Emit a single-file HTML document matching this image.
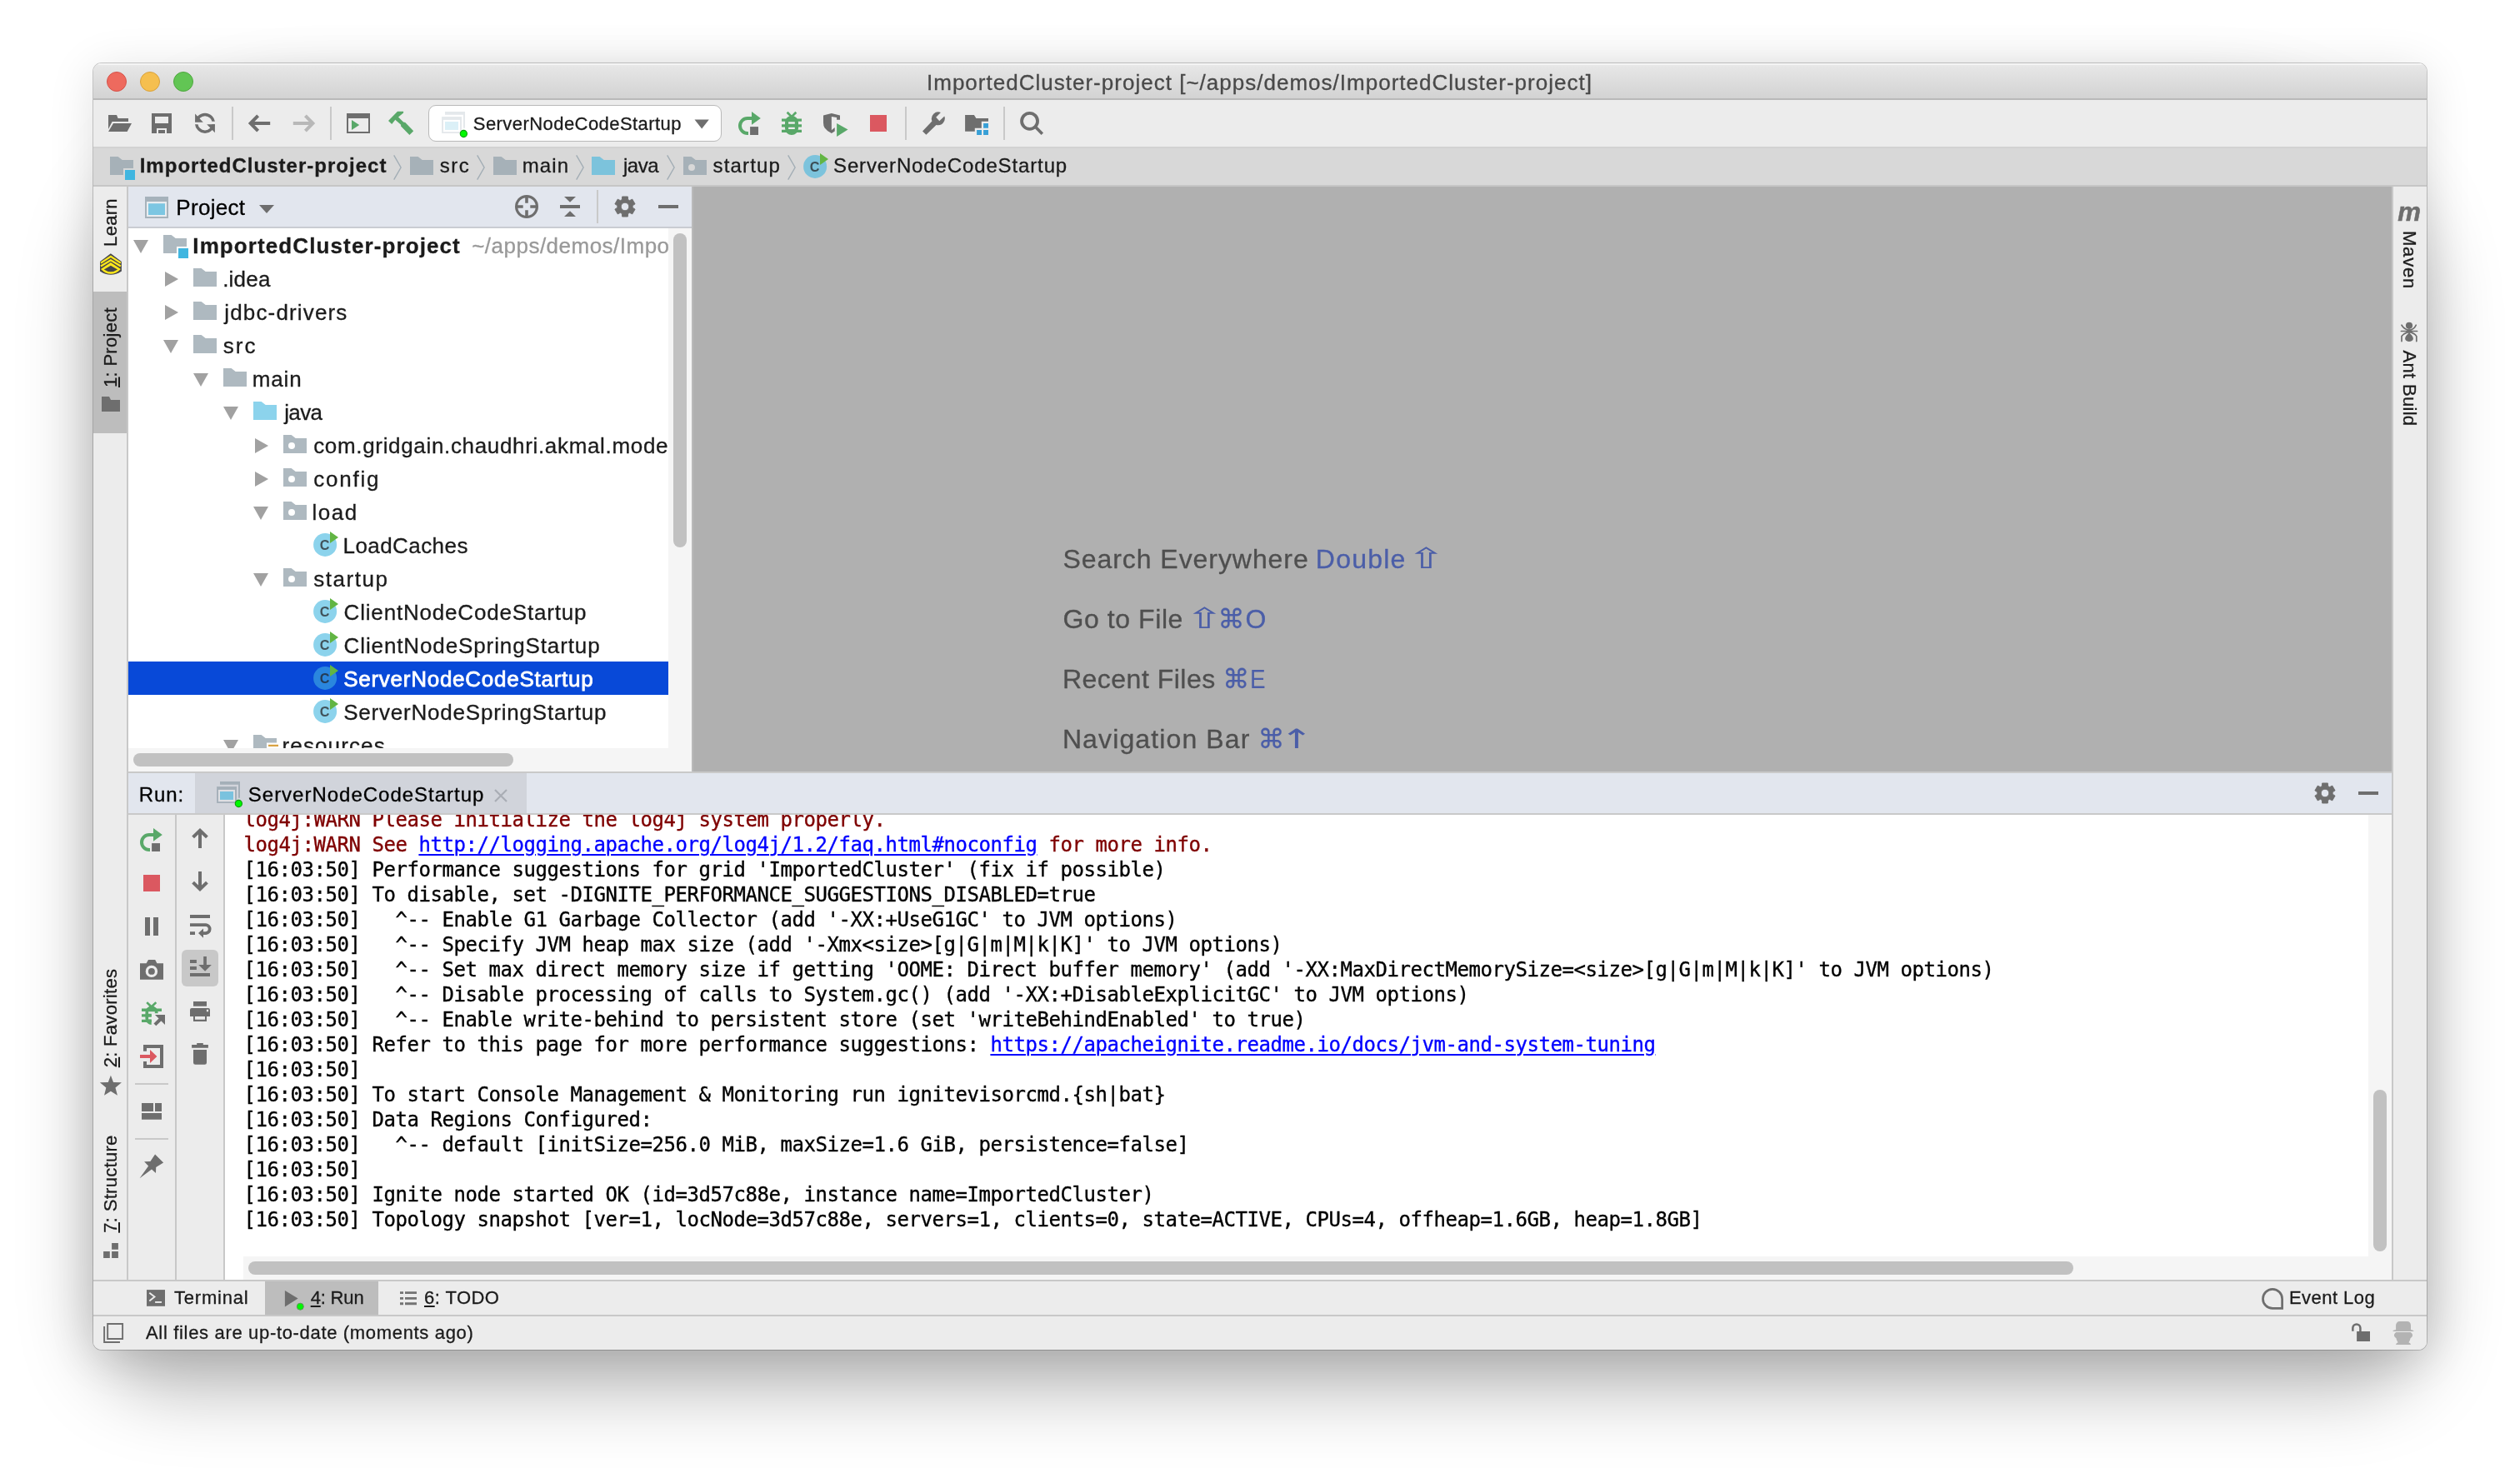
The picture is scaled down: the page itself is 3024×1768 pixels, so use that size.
<!DOCTYPE html>
<html><head><meta charset="utf-8"><title>ImportedCluster-project</title>
<style>
html,body{margin:0;padding:0}
body{width:3024px;height:1768px;overflow:hidden;background:#fff;position:relative;font-family:"Liberation Sans",sans-serif}
#sh{position:absolute;left:112px;top:76px;width:2800px;height:1544px;border-radius:10px;box-shadow:0 0 0 1px rgba(0,0,0,.2),0 8px 56px rgba(0,0,0,.12)}
#sh2{position:absolute;left:112px;top:76px;width:2800px;height:1544px;border-radius:250px 250px 90px 90px;box-shadow:0 48px 90px rgba(0,0,0,.28)}
#w{position:absolute;left:112px;top:76px;width:2800px;height:1544px;border-radius:10px;overflow:hidden;background:#ececec}
#w div,#w span.t,#w svg,#w pre{position:absolute}
#w svg{overflow:visible}
#w{will-change:transform}
.t{white-space:nowrap;-webkit-text-stroke:0.3px}
.t u{text-decoration-thickness:2px;text-underline-offset:2px}
.hint .sc{color:#4b5ea8;font-family:"Liberation Sans","DejaVu Sans",sans-serif}
.con pre{margin:0;font-family:"DejaVu Sans Mono","Liberation Mono",monospace;font-size:24px;line-height:30px;letter-spacing:-0.449px;color:#000;-webkit-text-stroke:0.35px}
.er{color:#7f0000}
.lk{color:#0000ff;text-decoration:underline;text-decoration-thickness:2px;text-underline-offset:3px}
</style></head>
<body>
<div id="sh2"></div>
<div id="sh"></div>
<div id="w">
<div style="left:0px;top:0px;width:2800px;height:42px;background:linear-gradient(#ebebeb,#e6e6e6 10%,#d3d3d3);"></div>
<div style="left:0px;top:0px;width:2800px;height:2px;background:#f4f4f4;"></div>
<div style="left:0px;top:42px;width:2800px;height:2px;background:#b9b9b9;"></div>
<svg style="left:14px;top:8px;" width="28" height="28" viewBox="0 0 28 28"><circle cx="14" cy="14" r="11.5" fill="#ee6a5e" stroke="#d5524a" stroke-width="1"/></svg>
<svg style="left:54px;top:8px;" width="28" height="28" viewBox="0 0 28 28"><circle cx="14" cy="14" r="11.5" fill="#f5bf4f" stroke="#d8a13c" stroke-width="1"/></svg>
<svg style="left:94px;top:8px;" width="28" height="28" viewBox="0 0 28 28"><circle cx="14" cy="14" r="11.5" fill="#62c554" stroke="#4fa73f" stroke-width="1"/></svg>
<span class="t" style="left:1000.00px;top:3.19px;font-size:26px;line-height:40px;color:#494949;letter-spacing:1.011px;">ImportedCluster-project [~/apps/demos/ImportedCluster-project]</span>
<div style="left:0px;top:44px;width:2800px;height:56px;background:#ececec;"></div>
<svg style="left:16px;top:56px;" width="32" height="32" viewBox="0 0 16 16"><path fill="#6e6e6e" d="M1,3 H6 L6.8,5 H13 V7 H3.3 L1,11.5 Z M4,8 H15 L12.3,13 H1 Z"/></svg>
<svg style="left:66px;top:56px;" width="32" height="32" viewBox="0 0 16 16"><path fill="#6e6e6e" fill-rule="evenodd" d="M2,2 H14 V14 H2 Z M4,4 V8 H12 V4 Z M5,11 V14 H11 V11 Z"/><rect fill="#6e6e6e" x="6" y="12" width="4" height="2"/></svg>
<svg style="left:118px;top:56px;" width="32" height="32" viewBox="0 0 16 16"><clipPath id="syT"><rect x="0" y="0" width="16" height="6.85"/></clipPath><clipPath id="syB"><rect x="0" y="8.6" width="16" height="8"/></clipPath><circle cx="8" cy="7.9" r="5.17" fill="none" stroke="#6e6e6e" stroke-width="1.75" clip-path="url(#syT)"/><circle cx="8" cy="7.9" r="5.17" fill="none" stroke="#6e6e6e" stroke-width="1.75" clip-path="url(#syB)"/><path fill="#6e6e6e" d="M2.05,2.3 V7.4 H6.9 Z M13.95,13.6 V8.6 H9.1 Z"/></svg>
<div style="left:166px;top:52px;width:2px;height:40px;background:#c9c9c9;"></div>
<svg style="left:183px;top:56px;" width="32" height="32" viewBox="0 0 16 16"><path fill="none" stroke="#6e6e6e" stroke-width="2" d="M7.3,3.4 L2.8,8 L7.3,12.6 M3,8 H14.6"/></svg>
<svg style="left:237px;top:56px;" width="32" height="32" viewBox="0 0 16 16"><path fill="none" stroke="#b8b8b8" stroke-width="2" d="M8.7,3.4 L13.2,8 L8.7,12.6 M13,8 H1.4"/></svg>
<div style="left:284px;top:52px;width:2px;height:40px;background:#c9c9c9;"></div>
<svg style="left:302px;top:56px;" width="32" height="32" viewBox="0 0 16 16"><path fill="#6e6e6e" fill-rule="evenodd" d="M1,2 H15 V14 H1 Z M2,5 V13 H14 V5 Z"/><path fill="#59a869" d="M4,6 V12 L8.6,9 Z"/></svg>
<svg style="left:353px;top:56px;" width="32" height="32" viewBox="0 0 16 16"><path fill="#59a869" d="M6,0.9 H9.55 V1.7 L6.5,4.25 L9.55,7.25 L10.65,7.5 L15.6,12.6 L13.2,15 L8.05,9.8 V8.9 L4.65,5.9 L2.6,8.5 L0.5,6.55 Z"/></svg>
<div style="left:402px;top:50px;width:352px;height:44px;background:#fff;border:1.5px solid #b9b9b9;border-radius:9px;box-sizing:border-box;"></div>
<svg style="left:416px;top:54px;" width="32" height="32" viewBox="0 0 16 16"><path fill="#e4e8eb" d="M3,2 H15 V11.9 H14 V3.9 H3 Z"/><path fill="#e4e8eb" d="M1.05,5.05 H13 V15 H1.05 Z"/><path fill="#ffffff" d="M2,6.95 H12 V14.1 H2 Z"/><path fill="#dbf0f7" d="M3,8 H11 V12.95 H3 Z"/><circle cx="14.18" cy="15.25" r="2.05" fill="#00f800" stroke="#0c9c0c" stroke-width=".55"/></svg>
<span class="t" style="left:455.80px;top:52.68px;font-size:22px;line-height:40px;color:#1b1b1b;letter-spacing:0.440px;">ServerNodeCodeStartup</span>
<svg style="left:718px;top:56px;" width="32" height="32" viewBox="0 0 16 16"><path fill="#6e6e6e" d="M1.75,5.75 H10.4 L6.08,11.25 Z"/></svg>
<svg style="left:772px;top:56px;" width="32" height="32" viewBox="0 0 16 16"><path fill="none" stroke="#59a869" stroke-width="2" d="M9.2,4.97 H6.5 A4.5,4.5 0 1 0 6.5,13.97 H7"/><path fill="#59a869" d="M9,1 V8.85 L14.4,5 Z"/><rect fill="#6e6e6e" x="8.05" y="10.05" width="4.95" height="4.95"/></svg>
<svg style="left:822px;top:56px;" width="32" height="32" viewBox="0 0 16 16"><path fill="#59a869" d="M2,5.3 H14 V6.93 H2 Z M2,8.57 H14 V10.2 H2 Z M2,11.85 H14 V13.48 H2 Z"/><path fill="#59a869" fill-rule="evenodd" d="M4,7.5 A4,4 0 0 1 12,7.5 V11 A4,4 0 0 1 4,11 Z M6.05,7.08 V8.42 H9.9 V7.08 Z M6.05,10.2 V11.54 H9.9 V10.2 Z"/><path fill="none" stroke="#59a869" stroke-width="1.35" d="M5.3,1.4 L8,4.1 L10.65,1.4"/></svg>
<svg style="left:874px;top:56px;" width="32" height="32" viewBox="0 0 16 16"><path fill="#6e6e6e" d="M1,3.2 L5.93,2 L11,3.2 V5.9 H9.05 V4.45 L5.93,3.95 V12.15 L7.86,10.5 V12.75 L5.93,13.95 Q3.2,12.8 1.8,10.8 Q1,9.4 1,7.6 Z"/><path fill="#59a869" d="M9.05,7.95 V16 L15.75,11.7 Z"/></svg>
<div style="left:932px;top:62px;width:20px;height:20px;background:#db5860;"></div>
<div style="left:974px;top:52px;width:2px;height:40px;background:#c9c9c9;"></div>
<svg style="left:992px;top:56px;" width="32" height="32" viewBox="0 0 16 16"><path fill="#6e6e6e" d="M1.5,12.75 L7.2,6.7 A4.05,4.05 0 0 1 12.44,1.49 L9.6,4.35 L11.65,6.57 L14.67,3.71 A4.05,4.05 0 0 1 9.75,8.95 L3.7,14.85 Z"/></svg>
<svg style="left:1044px;top:56px;" width="32" height="32" viewBox="0 0 16 16"><path fill="#6e6e6e" d="M1.05,3 H6.45 L7.7,5 H15 V6.9 H10.9 V10.85 H6.9 V12.9 H1.05 Z"/><path fill="#389fd6" d="M12.05,8.05 H15 V10.9 H12.05 Z M8.05,12.05 H11 V15 H8.05 Z M12.05,12.05 H15 V15 H12.05 Z"/></svg>
<div style="left:1092px;top:52px;width:2px;height:40px;background:#c9c9c9;"></div>
<svg style="left:1110px;top:56px;" width="32" height="32" viewBox="0 0 16 16"><circle cx="6.78" cy="6.65" r="4.75" fill="none" stroke="#6e6e6e" stroke-width="1.9"/><path stroke="#6e6e6e" stroke-width="1.8" d="M10,9.9 L14.4,14.35"/></svg>
<div style="left:0px;top:100px;width:2800px;height:2px;background:#d2d2d2;"></div>
<div style="left:0px;top:102px;width:2800px;height:44px;background:#d8d8d8;"></div>
<div style="left:0px;top:146px;width:2800px;height:2px;background:#c6c6c6;"></div>
<svg style="left:18px;top:108px;" width="32" height="32" viewBox="0 0 16 16"><path fill="#9aa7b0" fill-opacity=".8" d="M1,2 H5.8 L8.35,4 H15 V9 H9 V13 H1 Z"/><rect fill="#40b6e0" x="10" y="10" width="6" height="6"/></svg>
<span class="t" style="left:55.70px;top:103.18px;font-size:24px;line-height:40px;color:#1b1b1b;letter-spacing:1.018px;font-weight:700;">ImportedCluster-project</span>
<svg style="left:359px;top:108px;" width="12" height="40" viewBox="0 0 12 40"><path fill="none" stroke="#a2adb5" stroke-width="1.4" d="M1.7,2.4 L10.1,17 L1.7,31.6"/></svg>
<svg style="left:378px;top:108px;" width="32" height="32" viewBox="0 0 16 16"><path fill="#9aa7b0" fill-opacity=".8" d="M1,2 H5.8 L8.35,4 H15 V13 H1 Z"/></svg>
<span class="t" style="left:415.70px;top:103.18px;font-size:24px;line-height:40px;color:#1b1b1b;letter-spacing:1.500px;">src</span>
<svg style="left:459px;top:108px;" width="12" height="40" viewBox="0 0 12 40"><path fill="none" stroke="#a2adb5" stroke-width="1.4" d="M1.7,2.4 L10.1,17 L1.7,31.6"/></svg>
<svg style="left:478px;top:108px;" width="32" height="32" viewBox="0 0 16 16"><path fill="#9aa7b0" fill-opacity=".8" d="M1,2 H5.8 L8.35,4 H15 V13 H1 Z"/></svg>
<span class="t" style="left:514.70px;top:103.18px;font-size:24px;line-height:40px;color:#1b1b1b;letter-spacing:1.100px;">main</span>
<svg style="left:578px;top:108px;" width="12" height="40" viewBox="0 0 12 40"><path fill="none" stroke="#a2adb5" stroke-width="1.4" d="M1.7,2.4 L10.1,17 L1.7,31.6"/></svg>
<svg style="left:596px;top:108px;" width="32" height="32" viewBox="0 0 16 16"><path fill="#40b6e0" fill-opacity=".6" d="M1,2 H5.8 L8.35,4 H15 V13 H1 Z"/></svg>
<span class="t" style="left:636.00px;top:103.18px;font-size:24px;line-height:40px;color:#1b1b1b;letter-spacing:-0.500px;">java</span>
<svg style="left:687px;top:108px;" width="12" height="40" viewBox="0 0 12 40"><path fill="none" stroke="#a2adb5" stroke-width="1.4" d="M1.7,2.4 L10.1,17 L1.7,31.6"/></svg>
<svg style="left:706px;top:108px;" width="32" height="32" viewBox="0 0 16 16"><path fill="#9aa7b0" fill-opacity=".8" fill-rule="evenodd" d="M1,2 H5.8 L8.35,4 H15 V13 H1 Z M6,6.5 A2,2 0 1 0 6,10.5 A2,2 0 1 0 6,6.5 Z"/></svg>
<span class="t" style="left:743.50px;top:103.18px;font-size:24px;line-height:40px;color:#1b1b1b;letter-spacing:1.183px;">startup</span>
<svg style="left:831.5px;top:108px;" width="12" height="40" viewBox="0 0 12 40"><path fill="none" stroke="#a2adb5" stroke-width="1.4" d="M1.7,2.4 L10.1,17 L1.7,31.6"/></svg>
<svg style="left:850px;top:108px;" width="32" height="32" viewBox="0 0 16 16"><circle cx="8.05" cy="7.95" r="7" fill="#40b6e0" fill-opacity=".6"/><text x="7.75" y="10.8" text-anchor="middle" font-family="Liberation Sans,sans-serif" font-weight="700" font-size="8.1" fill="#231f20" fill-opacity=".72">C</text><path fill="#62b543" d="M11,0 V7 L16,3.5 Z"/></svg>
<span class="t" style="left:888.00px;top:103.18px;font-size:24px;line-height:40px;color:#1b1b1b;letter-spacing:0.870px;">ServerNodeCodeStartup</span>
<div style="left:0px;top:148px;width:40px;height:1312px;background:#ececec;"></div>
<div style="left:40px;top:148px;width:2px;height:1312px;background:#c8c8c8;"></div>
<div style="left:0px;top:274px;width:40px;height:170px;background:#bdbdbd;"></div>
<span class="t" style="left:-179.5px;top:176px;width:400px;height:30px;line-height:30px;text-align:center;font-size:22px;letter-spacing:0.3px;color:#1b1b1b;transform:rotate(-90deg)">Learn</span>
<svg style="left:5px;top:225px;" width="32" height="32" viewBox="0 0 16 16"><path fill="#46474c" d="M7.95,1.6 L14.45,6.46 V12.2 Q7.95,16.6 1.5,12.2 V6.46 Z"/><path fill="none" stroke="#ffe81a" stroke-width="1.12" d="M1.98,7.33 L7.95,3.42 L13.92,7.33 M1.98,9.25 L7.95,5.6 L13.92,9.25"/><path fill="#ffe81a" fill-rule="evenodd" d="M7.95,7.06 L13.95,10.95 Q7.95,16.85 1.95,10.95 Z M7.95,8.9 L12.06,11.2 Q7.95,14 3.9,11.2 Z"/></svg>
<span class="t" style="left:-179.5px;top:326px;width:400px;height:30px;line-height:30px;text-align:center;font-size:22px;letter-spacing:0.3px;color:#1b1b1b;transform:rotate(-90deg)"><u>1</u>: Project</span>
<svg style="left:5px;top:393px;" width="32" height="32" viewBox="0 0 16 16"><path fill="#6e6e6e" d="M2.5,3.5 H7 L8,5.5 H13.5 V12.5 H2.5 Z"/></svg>
<span class="t" style="left:-179.5px;top:1131px;width:400px;height:30px;line-height:30px;text-align:center;font-size:22px;letter-spacing:0.3px;color:#1b1b1b;transform:rotate(-90deg)"><u>2</u>: Favorites</span>
<svg style="left:5px;top:1211px;" width="32" height="32" viewBox="0 0 16 16"><path fill="#6e6e6e" d="M7.96,1.83 L9.52,6.04 L14.47,6.17 L10.74,9.23 L11.96,13.85 L7.96,11.33 L4.02,13.85 L5.17,9.23 L1.44,6.17 L6.39,6.04 Z"/></svg>
<span class="t" style="left:-179.5px;top:1329.5px;width:400px;height:30px;line-height:30px;text-align:center;font-size:22px;letter-spacing:0.3px;color:#1b1b1b;transform:rotate(-90deg)"><u>7</u>: Structure</span>
<svg style="left:5px;top:1409px;" width="32" height="32" viewBox="0 0 16 16"><path fill="#6e6e6e" d="M8.55,3.55 H12.45 V7.4 H8.55 Z M3.55,8.55 H7.4 V12.45 H3.55 Z M8.55,8.55 H12.45 V12.45 H8.55 Z"/></svg>
<div style="left:2758px;top:148px;width:2px;height:1312px;background:#c8c8c8;"></div>
<div style="left:2760px;top:148px;width:40px;height:1312px;background:#ececec;"></div>
<svg style="left:2763px;top:164px;" width="32" height="32" viewBox="0 0 16 16"><text x="8" y="12.35" text-anchor="middle" font-family="Liberation Sans,sans-serif" font-weight="700" font-style="italic" font-size="15.6" fill="#6e6e6e" stroke="#6e6e6e" stroke-width=".25">m</text></svg>
<span class="t" style="left:2579px;top:221.3px;width:400px;height:30px;line-height:30px;text-align:center;font-size:22px;letter-spacing:0.8px;color:#1b1b1b;transform:rotate(90deg)">Maven</span>
<svg style="left:2763px;top:307px;" width="32" height="32" viewBox="0 0 16 16"><circle cx="8" cy="3.93" r="2.04" fill="#6e6e6e"/><ellipse cx="8" cy="7.2" rx="1.3" ry="1.25" fill="#6e6e6e"/><path fill="#6e6e6e" d="M8,8.1 C9.2,9.2 10.5,10.6 10.45,11.8 C10.4,13 9.2,13.5 8,13.5 C6.8,13.5 5.6,13 5.55,11.8 C5.5,10.6 6.8,9.2 8,8.1 Z"/><path fill="none" stroke="#6e6e6e" stroke-width=".85" stroke-linecap="round" d="M7.4,6.6 Q4.8,5.8 3.5,3.6 M8.6,6.6 Q11.2,5.8 12.1,3.6 M3.2,7.26 H12.8 M7.3,7.7 Q4.6,8.8 3.5,10.3 V13.3 M8.7,7.7 Q11.4,8.8 12.4,10.3 V13.3"/></svg>
<span class="t" style="left:2579px;top:374.5px;width:400px;height:30px;line-height:30px;text-align:center;font-size:22px;letter-spacing:0.3px;color:#1b1b1b;transform:rotate(90deg)">Ant Build</span>
<div style="left:42px;top:148px;width:676px;height:48px;background:#e2e6ee;"></div>
<div style="left:42px;top:196px;width:676px;height:2px;background:#c9ccd2;"></div>
<svg style="left:60px;top:156px;" width="32" height="32" viewBox="0 0 16 16"><path fill="#a6b2bb" d="M1,2 H15 V15 H1 Z"/><path fill="#e8ecf0" d="M2,5 H14 V14 H2 Z"/><path fill="#7cc6e2" d="M3,6.1 H13 V13 H3 Z"/></svg>
<span class="t" style="left:99.30px;top:152.69px;font-size:26px;line-height:40px;color:#000;letter-spacing:0.300px;">Project</span>
<svg style="left:192px;top:159px;" width="32" height="32" viewBox="0 0 16 16"><path fill="#6e6e6e" d="M3.5,5.5 H12.5 L8,10.5 Z"/></svg>
<svg style="left:504px;top:156px;" width="32" height="32" viewBox="0 0 16 16"><circle cx="8" cy="8" r="6.2" fill="none" stroke="#6e6e6e" stroke-width="1.6"/><path stroke="#6e6e6e" stroke-width="1.8" d="M8,1.5 V5.85 M8,10.15 V14.5 M1.5,8 H5.85 M10.15,8 H14.5"/></svg>
<svg style="left:556px;top:156px;" width="32" height="32" viewBox="0 0 16 16"><path fill="#6e6e6e" d="M2,7 H14 V9 H2 Z M4.5,2 H11.5 L8,5.4 Z M4.5,14 H11.5 L8,10.6 Z"/></svg>
<div style="left:604px;top:152px;width:2px;height:40px;background:#c9c9c9;"></div>
<svg style="left:622px;top:156px;" width="32" height="32" viewBox="0 0 16 16"><path fill="#6e6e6e" fill-rule="evenodd" stroke="#6e6e6e" stroke-width=".45" stroke-linejoin="round" d="M6.21,3.76 L6.33,1.98 L9.67,1.98 L9.79,3.76 L10.77,4.33 L12.38,3.54 L14.05,6.43 L12.56,7.43 L12.56,8.57 L14.05,9.57 L12.38,12.46 L10.77,11.67 L9.79,12.24 L9.67,14.02 L6.33,14.02 L6.21,12.24 L5.23,11.67 L3.62,12.46 L1.95,9.57 L3.44,8.57 L3.44,7.43 L1.95,6.43 L3.62,3.54 L5.23,4.33 Z M8,5.6 A2.4,2.4 0 1 0 8,10.4 A2.4,2.4 0 1 0 8,5.6 Z"/></svg>
<div style="left:678px;top:170px;width:24px;height:4px;background:#6e6e6e;"></div>
<div style="left:42px;top:198px;width:648px;height:624px;background:#fff;"></div>
<div style="left:690px;top:198px;width:28px;height:652px;background:#f5f5f5;"></div>
<div style="left:42px;top:822px;width:648px;height:28px;background:#f5f5f5;"></div>
<div style="left:696px;top:204px;width:16px;height:377px;background:#c1c1c1;border-radius:8px;"></div>
<div style="left:48px;top:828px;width:456px;height:16px;background:#c1c1c1;border-radius:8px;"></div>
<div style="left:718px;top:148px;width:2px;height:702px;background:#bababa;"></div>
<div style="left:42px;top:198px;width:648px;height:624px;overflow:hidden">
<svg style="left:6px;top:14px" width="18" height="16" viewBox="0 0 18 16"><path fill="#a1a1a1" d="M0,0 H18 L9,16 Z"/></svg>
<svg style="left:40px;top:4px" width="32" height="32" viewBox="0 0 16 16"><path fill="#9aa7b0" fill-opacity=".8" d="M1,2 H5.8 L8.35,4 H15 V9 H9 V13 H1 Z"/><rect fill="#40b6e0" x="10" y="10" width="6" height="6"/></svg>
<span class="t" style="left:77.30px;top:0.69px;font-size:26px;line-height:40px;color:#1b1b1b;letter-spacing:1.105px;font-weight:700;">ImportedCluster-project</span>
<span class="t" style="left:412.20px;top:0.69px;font-size:26px;line-height:40px;color:#999;letter-spacing:0.487px;">~/apps/demos/ImportedCluster-project</span>
<svg style="left:44px;top:52px" width="16" height="18" viewBox="0 0 16 18"><path fill="#a1a1a1" d="M0,0 V18 L16,9 Z"/></svg>
<svg style="left:76px;top:44px" width="32" height="32" viewBox="0 0 16 16"><path fill="#9aa7b0" fill-opacity=".8" d="M1,2 H5.8 L8.35,4 H15 V13 H1 Z"/></svg>
<span class="t" style="left:113.20px;top:40.69px;font-size:26px;line-height:40px;color:#1b1b1b;letter-spacing:0.200px;">.idea</span>
<svg style="left:44px;top:92px" width="16" height="18" viewBox="0 0 16 18"><path fill="#a1a1a1" d="M0,0 V18 L16,9 Z"/></svg>
<svg style="left:76px;top:84px" width="32" height="32" viewBox="0 0 16 16"><path fill="#9aa7b0" fill-opacity=".8" d="M1,2 H5.8 L8.35,4 H15 V13 H1 Z"/></svg>
<span class="t" style="left:115.30px;top:80.69px;font-size:26px;line-height:40px;color:#1b1b1b;letter-spacing:1.155px;">jdbc-drivers</span>
<svg style="left:42px;top:134px" width="18" height="16" viewBox="0 0 18 16"><path fill="#a1a1a1" d="M0,0 H18 L9,16 Z"/></svg>
<svg style="left:76px;top:124px" width="32" height="32" viewBox="0 0 16 16"><path fill="#9aa7b0" fill-opacity=".8" d="M1,2 H5.8 L8.35,4 H15 V13 H1 Z"/></svg>
<span class="t" style="left:113.70px;top:120.69px;font-size:26px;line-height:40px;color:#1b1b1b;letter-spacing:2.050px;">src</span>
<svg style="left:78px;top:174px" width="18" height="16" viewBox="0 0 18 16"><path fill="#a1a1a1" d="M0,0 H18 L9,16 Z"/></svg>
<svg style="left:112px;top:164px" width="32" height="32" viewBox="0 0 16 16"><path fill="#9aa7b0" fill-opacity=".8" d="M1,2 H5.8 L8.35,4 H15 V13 H1 Z"/></svg>
<span class="t" style="left:148.70px;top:160.69px;font-size:26px;line-height:40px;color:#1b1b1b;letter-spacing:0.900px;">main</span>
<svg style="left:114px;top:214px" width="18" height="16" viewBox="0 0 18 16"><path fill="#a1a1a1" d="M0,0 H18 L9,16 Z"/></svg>
<svg style="left:148px;top:204px" width="32" height="32" viewBox="0 0 16 16"><path fill="#40b6e0" fill-opacity=".6" d="M1,2 H5.8 L8.35,4 H15 V13 H1 Z"/></svg>
<span class="t" style="left:187.30px;top:200.69px;font-size:26px;line-height:40px;color:#1b1b1b;letter-spacing:-0.700px;">java</span>
<svg style="left:152px;top:252px" width="16" height="18" viewBox="0 0 16 18"><path fill="#a1a1a1" d="M0,0 V18 L16,9 Z"/></svg>
<svg style="left:184px;top:244px" width="32" height="32" viewBox="0 0 16 16"><path fill="#9aa7b0" fill-opacity=".8" fill-rule="evenodd" d="M1,2 H5.8 L8.35,4 H15 V13 H1 Z M6,6.5 A2,2 0 1 0 6,10.5 A2,2 0 1 0 6,6.5 Z"/></svg>
<span class="t" style="left:222.20px;top:240.69px;font-size:26px;line-height:40px;color:#1b1b1b;letter-spacing:0.666px;">com.gridgain.chaudhri.akmal.model</span>
<svg style="left:152px;top:292px" width="16" height="18" viewBox="0 0 16 18"><path fill="#a1a1a1" d="M0,0 V18 L16,9 Z"/></svg>
<svg style="left:184px;top:284px" width="32" height="32" viewBox="0 0 16 16"><path fill="#9aa7b0" fill-opacity=".8" fill-rule="evenodd" d="M1,2 H5.8 L8.35,4 H15 V13 H1 Z M6,6.5 A2,2 0 1 0 6,10.5 A2,2 0 1 0 6,6.5 Z"/></svg>
<span class="t" style="left:222.20px;top:280.69px;font-size:26px;line-height:40px;color:#1b1b1b;letter-spacing:1.780px;">config</span>
<svg style="left:150px;top:334px" width="18" height="16" viewBox="0 0 18 16"><path fill="#a1a1a1" d="M0,0 H18 L9,16 Z"/></svg>
<svg style="left:184px;top:324px" width="32" height="32" viewBox="0 0 16 16"><path fill="#9aa7b0" fill-opacity=".8" fill-rule="evenodd" d="M1,2 H5.8 L8.35,4 H15 V13 H1 Z M6,6.5 A2,2 0 1 0 6,10.5 A2,2 0 1 0 6,6.5 Z"/></svg>
<span class="t" style="left:220.60px;top:320.69px;font-size:26px;line-height:40px;color:#1b1b1b;letter-spacing:1.467px;">load</span>
<svg style="left:220px;top:364px" width="32" height="32" viewBox="0 0 16 16"><circle cx="8.05" cy="7.95" r="7" fill="#40b6e0" fill-opacity=".6"/><text x="7.75" y="10.8" text-anchor="middle" font-family="Liberation Sans,sans-serif" font-weight="700" font-size="8.1" fill="#231f20" fill-opacity=".72">C</text><path fill="#62b543" d="M11,0 V7 L16,3.5 Z"/></svg>
<span class="t" style="left:257.60px;top:360.69px;font-size:26px;line-height:40px;color:#1b1b1b;letter-spacing:0.422px;">LoadCaches</span>
<svg style="left:150px;top:414px" width="18" height="16" viewBox="0 0 18 16"><path fill="#a1a1a1" d="M0,0 H18 L9,16 Z"/></svg>
<svg style="left:184px;top:404px" width="32" height="32" viewBox="0 0 16 16"><path fill="#9aa7b0" fill-opacity=".8" fill-rule="evenodd" d="M1,2 H5.8 L8.35,4 H15 V13 H1 Z M6,6.5 A2,2 0 1 0 6,10.5 A2,2 0 1 0 6,6.5 Z"/></svg>
<span class="t" style="left:222.20px;top:400.69px;font-size:26px;line-height:40px;color:#1b1b1b;letter-spacing:1.550px;">startup</span>
<svg style="left:220px;top:444px" width="32" height="32" viewBox="0 0 16 16"><circle cx="8.05" cy="7.95" r="7" fill="#40b6e0" fill-opacity=".6"/><text x="7.75" y="10.8" text-anchor="middle" font-family="Liberation Sans,sans-serif" font-weight="700" font-size="8.1" fill="#231f20" fill-opacity=".72">C</text><path fill="#62b543" d="M11,0 V7 L16,3.5 Z"/></svg>
<span class="t" style="left:258.60px;top:440.69px;font-size:26px;line-height:40px;color:#1b1b1b;letter-spacing:0.815px;">ClientNodeCodeStartup</span>
<svg style="left:220px;top:484px" width="32" height="32" viewBox="0 0 16 16"><circle cx="8.05" cy="7.95" r="7" fill="#40b6e0" fill-opacity=".6"/><text x="7.75" y="10.8" text-anchor="middle" font-family="Liberation Sans,sans-serif" font-weight="700" font-size="8.1" fill="#231f20" fill-opacity=".72">C</text><path fill="#62b543" d="M11,0 V7 L16,3.5 Z"/></svg>
<span class="t" style="left:258.60px;top:480.69px;font-size:26px;line-height:40px;color:#1b1b1b;letter-spacing:0.882px;">ClientNodeSpringStartup</span>
<div style="left:0;top:520px;width:648px;height:40px;background:#0849d8"></div>
<svg style="left:220px;top:524px" width="32" height="32" viewBox="0 0 16 16"><circle cx="8.05" cy="7.95" r="7" fill="#2a86de" fill-opacity="1"/><text x="7.75" y="10.8" text-anchor="middle" font-family="Liberation Sans,sans-serif" font-weight="700" font-size="8.1" fill="#231f20" fill-opacity=".72">C</text><path fill="#62b543" d="M11,0 V7 L16,3.5 Z"/></svg>
<span class="t" style="left:258.20px;top:520.69px;font-size:26px;line-height:40px;color:#fff;letter-spacing:0.740px;-webkit-text-stroke:0.8px;">ServerNodeCodeStartup</span>
<svg style="left:220px;top:564px" width="32" height="32" viewBox="0 0 16 16"><circle cx="8.05" cy="7.95" r="7" fill="#40b6e0" fill-opacity=".6"/><text x="7.75" y="10.8" text-anchor="middle" font-family="Liberation Sans,sans-serif" font-weight="700" font-size="8.1" fill="#231f20" fill-opacity=".72">C</text><path fill="#62b543" d="M11,0 V7 L16,3.5 Z"/></svg>
<span class="t" style="left:258.20px;top:560.69px;font-size:26px;line-height:40px;color:#1b1b1b;letter-spacing:0.795px;">ServerNodeSpringStartup</span>
<svg style="left:114px;top:614px" width="18" height="16" viewBox="0 0 18 16"><path fill="#a1a1a1" d="M0,0 H18 L9,16 Z"/></svg>
<svg style="left:148px;top:604px" width="32" height="32" viewBox="0 0 16 16"><path fill="#9aa7b0" fill-opacity=".8" d="M1,2 H5.8 L8.35,4 H15 V6.7 H9 V13 H1 Z"/><path fill="#d9a343" d="M10,7.9 H16 V9 H10 Z M10,10 H16 V11.1 H10 Z M10,12.1 H16 V13.2 H10 Z M10,14.2 H16 V15.3 H10 Z"/></svg>
<span class="t" style="left:184.60px;top:600.69px;font-size:26px;line-height:40px;color:#1b1b1b;letter-spacing:1.112px;">resources</span>
</div>
<div style="left:720px;top:148px;width:2038px;height:702px;background:#b0b0b0;"></div>
<span class="t" style="left:1163.50px;top:574.81px;font-size:32px;line-height:40px;color:#4f4f4f;letter-spacing:0.938px;">Search Everywhere</span>
<span class="t" style="left:1466.80px;top:574.81px;font-size:32px;line-height:40px;color:#4b5ea8;letter-spacing:1.240px;">Double</span>
<span class="t" style="left:1576.34px;top:574.81px;font-size:32px;line-height:40px;color:#4b5ea8;letter-spacing:0.000px;font-family:'DejaVu Sans','Liberation Sans',sans-serif;transform:scale(1.760,1.07);transform-origin:0 31.1px;-webkit-text-stroke:0;">&#x21E7;</span>
<span class="t" style="left:1163.50px;top:646.91px;font-size:32px;line-height:40px;color:#4f4f4f;letter-spacing:0.578px;">Go to File</span>
<span class="t" style="left:1310.04px;top:646.91px;font-size:32px;line-height:40px;color:#4b5ea8;letter-spacing:0.000px;font-family:'DejaVu Sans','Liberation Sans',sans-serif;transform:scale(1.760,1.07);transform-origin:0 31.1px;-webkit-text-stroke:0;">&#x21E7;</span>
<span class="t" style="left:1349.40px;top:646.91px;font-size:32px;line-height:40px;color:#4b5ea8;letter-spacing:0.000px;font-family:'DejaVu Sans','Liberation Sans',sans-serif;">&#x2318;</span>
<span class="t" style="left:1382.50px;top:646.91px;font-size:32px;line-height:40px;color:#4b5ea8;letter-spacing:0.000px;">O</span>
<span class="t" style="left:1162.90px;top:719.21px;font-size:32px;line-height:40px;color:#4f4f4f;letter-spacing:0.500px;">Recent Files</span>
<span class="t" style="left:1355.30px;top:719.21px;font-size:32px;line-height:40px;color:#4b5ea8;letter-spacing:0.000px;font-family:'DejaVu Sans','Liberation Sans',sans-serif;">&#x2318;</span>
<span class="t" style="left:1388.39px;top:719.21px;font-size:32px;line-height:40px;color:#4b5ea8;letter-spacing:0.000px;transform:scale(0.871,1.0);transform-origin:0 31.1px;-webkit-text-stroke:0;">E</span>
<span class="t" style="left:1162.90px;top:791.21px;font-size:32px;line-height:40px;color:#4f4f4f;letter-spacing:1.123px;">Navigation Bar</span>
<span class="t" style="left:1397.40px;top:791.21px;font-size:32px;line-height:40px;color:#4b5ea8;letter-spacing:0.000px;font-family:'DejaVu Sans','Liberation Sans',sans-serif;">&#x2318;</span>
<span class="t" style="left:1423.91px;top:791.21px;font-size:32px;line-height:40px;color:#4b5ea8;letter-spacing:0.000px;font-family:'DejaVu Sans','Liberation Sans',sans-serif;transform:scale(1.485,1.0);transform-origin:0 31.1px;-webkit-text-stroke:0;">&#x2191;</span>
<div style="left:42px;top:850px;width:2716px;height:2px;background:#c9c9c9;"></div>
<div style="left:42px;top:852px;width:2716px;height:48px;background:#e2e6ee;"></div>
<div style="left:122px;top:852px;width:398px;height:48px;background:#d1d4db;"></div>
<div style="left:42px;top:900px;width:2716px;height:2px;background:#c9c9c9;"></div>
<span class="t" style="left:54.80px;top:857.88px;font-size:24px;line-height:40px;color:#000;letter-spacing:0.900px;">Run:</span>
<svg style="left:146px;top:858px;" width="32" height="32" viewBox="0 0 16 16"><path fill="#a4afb8" d="M3,2 H15 V11.9 H14 V3.9 H3 Z"/><path fill="#a4afb8" d="M1.05,5.05 H13 V15 H1.05 Z"/><path fill="#dedfe3" d="M2,6.95 H12 V14.1 H2 Z"/><path fill="#7ac2de" d="M3,8 H11 V12.95 H3 Z"/><circle cx="14.18" cy="15.25" r="2.05" fill="#00f800" stroke="#0c9c0c" stroke-width=".55"/></svg>
<span class="t" style="left:185.80px;top:857.88px;font-size:24px;line-height:40px;color:#000;letter-spacing:0.990px;">ServerNodeCodeStartup</span>
<svg style="left:473px;top:863px;" width="32" height="32" viewBox="0 0 16 16"><path stroke="#a9adb5" stroke-width="1.1" fill="none" d="M4.5,4.5 L11.5,11.5 M11.5,4.5 L4.5,11.5"/></svg>
<svg style="left:2662px;top:860px;" width="32" height="32" viewBox="0 0 16 16"><path fill="#6e6e6e" fill-rule="evenodd" stroke="#6e6e6e" stroke-width=".45" stroke-linejoin="round" d="M6.21,3.76 L6.33,1.98 L9.67,1.98 L9.79,3.76 L10.77,4.33 L12.38,3.54 L14.05,6.43 L12.56,7.43 L12.56,8.57 L14.05,9.57 L12.38,12.46 L10.77,11.67 L9.79,12.24 L9.67,14.02 L6.33,14.02 L6.21,12.24 L5.23,11.67 L3.62,12.46 L1.95,9.57 L3.44,8.57 L3.44,7.43 L1.95,6.43 L3.62,3.54 L5.23,4.33 Z M8,5.6 A2.4,2.4 0 1 0 8,10.4 A2.4,2.4 0 1 0 8,5.6 Z"/></svg>
<div style="left:2718px;top:874px;width:24px;height:4px;background:#6e6e6e;"></div>
<div style="left:42px;top:902px;width:56px;height:558px;background:#ececec;"></div>
<div style="left:98px;top:902px;width:2px;height:558px;background:#c8c8c8;"></div>
<div style="left:100px;top:902px;width:56px;height:558px;background:#ececec;"></div>
<div style="left:156px;top:902px;width:2px;height:558px;background:#c8c8c8;"></div>
<svg style="left:54px;top:916px;" width="32" height="32" viewBox="0 0 16 16"><path fill="none" stroke="#59a869" stroke-width="2" d="M9.2,4.97 H6.5 A4.5,4.5 0 1 0 6.5,13.97 H7"/><path fill="#59a869" d="M9,1 V8.85 L14.4,5 Z"/><rect fill="#6e6e6e" x="8.05" y="10.05" width="4.95" height="4.95"/></svg>
<div style="left:60px;top:974px;width:20px;height:20px;background:#db5860;"></div>
<svg style="left:54px;top:1020px;" width="32" height="32" viewBox="0 0 16 16"><path fill="#6e6e6e" d="M4,2.5 H7 V13.5 H4 Z M9,2.5 H12 V13.5 H9 Z"/></svg>
<svg style="left:54px;top:1072px;" width="32" height="32" viewBox="0 0 16 16"><path fill="#6e6e6e" fill-rule="evenodd" d="M1,4.1 H4.8 L6,2 H10.1 L11.2,4.1 H15 V13.9 H1 Z M7.95,5.35 A3.6,3.6 0 1 0 7.95,12.55 A3.6,3.6 0 1 0 7.95,5.35 Z"/><circle cx="7.95" cy="8.95" r="1.98" fill="#6e6e6e"/></svg>
<svg style="left:54px;top:1124px;" width="32" height="32" viewBox="0 0 16 16"><clipPath id="baC"><path d="M0,0 H16 V8.1 H7.85 V16 H0 Z"/></clipPath><g clip-path="url(#baC)"><path fill="#59a869" d="M2,5.27 H14 V6.95 H2 Z M2,8.57 H14 V10.27 H2 Z M2,11.85 H14 V13.55 H2 Z"/><path fill="#59a869" fill-rule="evenodd" d="M4.2,7.5 A3.8,3.8 0 0 1 11.8,7.5 V11.2 A3.8,3.8 0 0 1 4.2,11.2 Z M6.05,7.08 V8.42 H9.9 V7.08 Z M6.05,10.3 V11.7 H9.9 V10.3 Z"/><path fill="none" stroke="#59a869" stroke-width="1.35" d="M5.1,1.55 L7.87,4.25 L10.65,1.55"/></g><path fill="#6e6e6e" d="M10,9.05 H16 V15 Z"/><path stroke="#6e6e6e" stroke-width="2" d="M9.95,14.97 L13.6,11.4"/></svg>
<svg style="left:54px;top:1176px;" width="32" height="32" viewBox="0 0 16 16"><path fill="#6e6e6e" d="M3,1 H15 V14.95 H3 V11 H5 V12.95 H13 V3 H5 V4.9 H3 Z"/><path fill="#db5860" d="M1,7 H7 V3.95 L11.2,8 L7,12 V9.05 H1 Z"/></svg>
<div style="left:50px;top:1224px;width:40px;height:2px;background:#c9c9c9;"></div>
<svg style="left:54px;top:1242px;" width="32" height="32" viewBox="0 0 16 16"><path fill="#6e6e6e" d="M2,3 H9 V7.95 H2 Z M10,3 H14 V7.95 H10 Z M2,9.05 H14 V12.9 H2 Z"/></svg>
<div style="left:50px;top:1290px;width:40px;height:2px;background:#c9c9c9;"></div>
<svg style="left:54px;top:1308px;" width="32" height="32" viewBox="0 0 16 16"><path fill="#6e6e6e" d="M10.03,0.8 L15.05,5.7 L10.6,8.45 L10.5,12.05 L8,9.8 L0.8,15.1 L6.05,7.7 L3.55,5.1 L7.2,5.05 Z"/></svg>
<svg style="left:112px;top:914px;" width="32" height="32" viewBox="0 0 16 16"><path fill="none" stroke="#6e6e6e" stroke-width="2" d="M3.8,7.45 L8,3.36 L12.2,7.45 M8,3.5 V13.95"/></svg>
<svg style="left:112px;top:966px;" width="32" height="32" viewBox="0 0 16 16"><path fill="none" stroke="#6e6e6e" stroke-width="2" d="M3.8,8.55 L8,12.62 L12.2,8.55 M8,12.5 V1.95"/></svg>
<svg style="left:112px;top:1020px;" width="32" height="32" viewBox="0 0 16 16"><path fill="#6e6e6e" d="M2,1.05 H14 V2.95 H2 Z M2,11.1 H5 V13 H2 Z M7,12 L10,9.2 V14.9 Z"/><path fill="none" stroke="#6e6e6e" stroke-width="1.9" d="M2,7.07 H11.55 A2.5,2.5 0 0 1 11.55,12.05 H9.8"/></svg>
<div style="left:106px;top:1064px;width:44px;height:44px;background:#c8c8c8;border-radius:6px;"></div>
<svg style="left:112px;top:1070px;" width="32" height="32" viewBox="0 0 16 16"><path fill="#6e6e6e" d="M2,3.05 H5.95 V4.95 H2 Z M2,7.05 H5.95 V9 H2 Z M2,11.05 H14 V12.95 H2 Z M10.1,1 H11.95 V5.95 H14.95 L11.03,9.9 L7.1,5.95 H10.1 Z"/></svg>
<svg style="left:112px;top:1122px;" width="32" height="32" viewBox="0 0 16 16"><path fill="#6e6e6e" fill-rule="evenodd" d="M4,2 H12 V4.85 H4 Z M2,7 A1,1 0 0 1 3,6.05 H13 A1,1 0 0 1 14,7 V11 H12 V13.95 H4 V11 H2 Z M5,11 V12.85 H11 V11 Z M11.95,6.9 V8.1 H13.05 V6.9 Z"/></svg>
<svg style="left:112px;top:1174px;" width="32" height="32" viewBox="0 0 16 16"><path fill="#6e6e6e" d="M6.1,1 H9.9 V2 H12.95 V3.9 H3.05 V2 H6.1 Z M4,4.97 H12 V12.7 A1.2,1.2 0 0 1 10.8,13.9 H5.2 A1.2,1.2 0 0 1 4,12.7 Z"/></svg>
<div style="left:158px;top:902px;width:2572px;height:530px;background:#fff;"></div>
<div style="left:2730px;top:902px;width:28px;height:558px;background:#f5f5f5;"></div>
<div style="left:180px;top:1432px;width:2578px;height:28px;background:#f5f5f5;"></div>
<div style="left:158px;top:1432px;width:22px;height:28px;background:#fff;"></div>
<div style="left:2736px;top:1232px;width:16px;height:194px;background:#c1c1c1;border-radius:8px;"></div>
<div style="left:186px;top:1438px;width:2190px;height:16px;background:#c1c1c1;border-radius:8px;"></div>
<div class="con" style="left:158px;top:902px;width:2572px;height:530px;overflow:hidden"><pre style="left:22.4px;top:-9.4px"><span class="er">log4j:WARN Please initialize the log4j system properly.</span>
<span class="er">log4j:WARN See </span><span class="lk">http://logging.apache.org/log4j/1.2/faq.html#noconfig</span><span class="er"> for more info.</span>
[16:03:50] Performance suggestions for grid 'ImportedCluster' (fix if possible)
[16:03:50] To disable, set -DIGNITE_PERFORMANCE_SUGGESTIONS_DISABLED=true
[16:03:50]   ^-- Enable G1 Garbage Collector (add '-XX:+UseG1GC' to JVM options)
[16:03:50]   ^-- Specify JVM heap max size (add '-Xmx&lt;size&gt;[g|G|m|M|k|K]' to JVM options)
[16:03:50]   ^-- Set max direct memory size if getting 'OOME: Direct buffer memory' (add '-XX:MaxDirectMemorySize=&lt;size&gt;[g|G|m|M|k|K]' to JVM options)
[16:03:50]   ^-- Disable processing of calls to System.gc() (add '-XX:+DisableExplicitGC' to JVM options)
[16:03:50]   ^-- Enable write-behind to persistent store (set 'writeBehindEnabled' to true)
[16:03:50] Refer to this page for more performance suggestions: <span class="lk">https://apacheignite.readme.io/docs/jvm-and-system-tuning</span>
[16:03:50] 
[16:03:50] To start Console Management &amp; Monitoring run ignitevisorcmd.{sh|bat}
[16:03:50] Data Regions Configured:
[16:03:50]   ^-- default [initSize=256.0 MiB, maxSize=1.6 GiB, persistence=false]
[16:03:50] 
[16:03:50] Ignite node started OK (id=3d57c88e, instance name=ImportedCluster)
[16:03:50] Topology snapshot [ver=1, locNode=3d57c88e, servers=1, clients=0, state=ACTIVE, CPUs=4, offheap=1.6GB, heap=1.8GB]</pre></div>
<div style="left:0px;top:1460px;width:2800px;height:2px;background:#c8c8c8;"></div>
<div style="left:0px;top:1462px;width:2800px;height:40px;background:#ececec;"></div>
<div style="left:206px;top:1462px;width:136px;height:40px;background:#bdbdbd;"></div>
<div style="left:0px;top:1502px;width:2800px;height:2px;background:#c8c8c8;"></div>
<div style="left:0px;top:1504px;width:2800px;height:40px;background:#ececec;"></div>
<svg style="left:59px;top:1466px;" width="32" height="32" viewBox="0 0 16 16"><path fill="#6e6e6e" d="M2.5,3.05 H13.5 V12.9 H2.5 Z"/><path fill="none" stroke="#ececec" stroke-width=".95" d="M4.15,4.85 L7.25,7.3 L4.15,9.75"/><path fill="#ececec" d="M7.55,10 H11.5 V10.95 H7.55 Z"/></svg>
<span class="t" style="left:97.00px;top:1462.08px;font-size:22px;line-height:40px;color:#1b1b1b;letter-spacing:0.786px;">Terminal</span>
<svg style="left:222px;top:1466px;" width="32" height="32" viewBox="0 0 16 16"><path fill="#6e6e6e" d="M3.95,3.55 V13.3 L11.8,8.3 Z"/><circle cx="13.15" cy="13.1" r="2" fill="#00f800" stroke="#5c965c" stroke-width=".5"/></svg>
<span class="t" style="left:260.70px;top:1462.08px;font-size:22px;line-height:40px;color:#1b1b1b;letter-spacing:-0.180px;"><u>4</u>: Run</span>
<svg style="left:362px;top:1466px;" width="32" height="32" viewBox="0 0 16 16"><path fill="#737373" d="M3,4.08 H5 V5.55 H3 Z M6,4.08 H13 V5.55 H6 Z M3,7.45 H5 V8.92 H3 Z M6,7.45 H13 V8.92 H6 Z M3,10.6 H5 V12.1 H3 Z M6,10.6 H13 V12.1 H6 Z"/></svg>
<span class="t" style="left:397.00px;top:1462.08px;font-size:22px;line-height:40px;color:#1b1b1b;letter-spacing:0.450px;"><u>6</u>: TODO</span>
<svg style="left:2599px;top:1466px;" width="32" height="32" viewBox="0 0 16 16"><path fill="none" stroke="#6e6e6e" stroke-width="1.35" d="M13.81,8.45 A5.78,5.78 0 1 0 8.03,14.23 H13.81 Z"/></svg>
<span class="t" style="left:2635.00px;top:1462.08px;font-size:22px;line-height:40px;color:#1b1b1b;letter-spacing:0.450px;">Event Log</span>
<svg style="left:8px;top:1508px;" width="32" height="32" viewBox="0 0 16 16"><path fill="none" stroke="#6e6e6e" stroke-width=".95" d="M4.58,2.52 H13.55 V11.48 H4.58 Z"/><path fill="#6e6e6e" d="M2.08,4.05 H3.03 V13.03 H11.98 V14 H2.08 Z"/></svg>
<span class="t" style="left:63.00px;top:1504.18px;font-size:22px;line-height:40px;color:#1b1b1b;letter-spacing:0.670px;">All files are up-to-date (moments ago)</span>
<svg style="left:2706px;top:1508px;" width="32" height="32" viewBox="0 0 16 16"><path fill="#6e6e6e" d="M5.05,7 H13 V13 H5.05 Z"/><path fill="none" stroke="#6e6e6e" stroke-width="1.25" d="M2.67,6.9 V4.9 A2.27,2.27 0 0 1 7.2,4.9 V7.1"/></svg>
<svg style="left:2754px;top:1508px;" width="32" height="32" viewBox="0 0 16 16"><path fill="#b3b3b3" d="M6.7,1.03 H11.3 A2.2,2.2 0 0 1 13.5,3.23 V6.05 H4.54 V3.23 A2.2,2.2 0 0 1 6.7,1.03 Z M2.5,6.95 Q3.2,6.05 4.6,6.05 H13.4 Q14.8,6.05 15.4,6.95 Z M4.6,7.5 H13.4 Q14.9,8.6 14.4,10 Q13.9,10.8 13.3,11.1 Q13,12.6 12.2,13.6 Q13.3,13.9 13.5,15 H4.5 Q4.7,13.9 5.8,13.6 Q5,12.6 4.7,11.1 Q4.1,10.8 3.6,10 Q3.1,8.6 4.6,7.5 Z"/></svg>
</div>
</body></html>
